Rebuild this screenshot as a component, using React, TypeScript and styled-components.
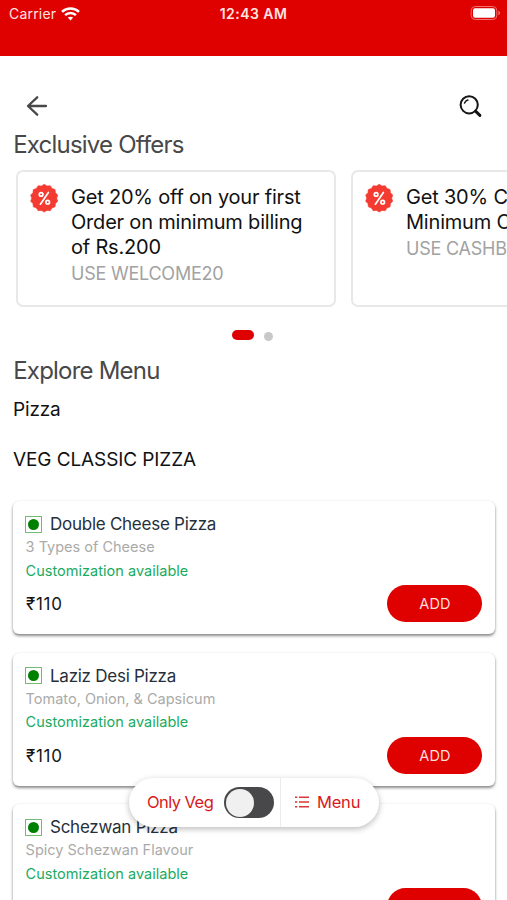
import React from "react";
import styled, { createGlobalStyle } from "styled-components";

const GlobalStyle = createGlobalStyle`
  * { box-sizing: border-box; }
  html, body { margin: 0; padding: 0; background: #fff; }
  body { overflow: hidden; font-family: Inter, "Liberation Sans", sans-serif; }
  button { font-family: inherit; border: 0; padding: 0; background: none; }
  h1, h2, h3, p { margin: 0; font-weight: 400; }
  svg { display: block; }
`;

const Screen = styled.main`
  position: relative;
  width: 507px;
  height: 900px;
  overflow: hidden;
  background: #fff;
`;

const StatusBar = styled.header`
  display: grid;
  grid-template-columns: 1fr auto 1fr;
  height: 56px;
  padding: 4px 6px 0 9px;
  background: #df0000;
  color: #ffe4e2;
  font-size: 14px;
  line-height: 20px;
`;

const Carrier = styled.div`
  display: flex;
  gap: 5px;
  height: 20px;
  align-items: center;
  letter-spacing: 0.2px;
`;

const Clock = styled.div`
  margin-left: -3px;
  font-weight: 600;
  letter-spacing: 0.45px;
`;

const Battery = styled.div`
  display: flex;
  justify-content: flex-end;
  padding-top: 1px;
`;

const Toolbar = styled.nav`
  display: flex;
  justify-content: space-between;
  align-items: center;
  height: 70px;
  padding: 30px 24px 0 25px;
`;

const Heading = styled.h1<{ $gap?: number }>`
  margin-top: ${(p) => p.$gap ?? 0}px;
  padding-left: 13.2px;
  height: 32px;
  line-height: 32px;
  font-size: 24px;
  letter-spacing: -0.79px;
  color: #484848;
`;

const Offers = styled.section`
  display: flex;
  gap: 15px;
  margin-top: 9px;
  padding-left: 16px;
`;

const Offer = styled.article`
  display: flex;
  flex: 0 0 320px;
  gap: 12px;
  height: 137px;
  padding: 12px;
  border: 2px solid #e8e8e8;
  border-radius: 7px;
`;

const OfferTitle = styled.h2`
  width: 250px;
  margin-top: 1px;
  font-size: 20px;
  line-height: 25px;
  letter-spacing: -0.2px;
  color: #111;
  white-space: pre-line;
`;

const OfferCode = styled.p`
  font-size: 18px;
  line-height: 27px;
  letter-spacing: -0.23px;
  color: #a2a2a2;
`;

const Dots = styled.div`
  display: flex;
  justify-content: center;
  align-items: center;
  gap: 10px;
  height: 12px;
  margin-top: 22px;
  padding-right: 3px;
`;

const Dot = styled.i<{ $active?: boolean }>`
  width: ${(p) => (p.$active ? 22 : 9)}px;
  height: ${(p) => (p.$active ? 10 : 9)}px;
  margin-top: ${(p) => (p.$active ? -1 : 2)}px;
  border-radius: 5px;
  background: ${(p) => (p.$active ? "#df0000" : "#c8c8c8")};
`;

const Category = styled.h2<{ $gap: number; $track: number }>`
  margin-top: ${(p) => p.$gap}px;
  padding-left: 13px;
  height: 24px;
  font-size: 19px;
  line-height: 24px;
  letter-spacing: ${(p) => p.$track}px;
  color: #111;
`;

const Dishes = styled.section`
  display: grid;
  gap: 18.6px;
  margin-top: 29.5px;
  padding: 0 12px 0 13px;
`;

const Dish = styled.article`
  height: 133px;
  padding: 12px 13px 0 12px;
  border-radius: 6px;
  background: #fff;
  box-shadow: 0 2px 3px rgba(0, 0, 0, 0.45), 0 0 2px rgba(0, 0, 0, 0.08);
`;

const DishName = styled.h3`
  display: flex;
  align-items: center;
  gap: 8px;
  height: 22px;
  font-size: 17px;
  line-height: 22px;
  letter-spacing: -0.26px;
  color: #25303b;
`;

const VegMark = styled.i`
  display: grid;
  place-items: center;
  width: 17px;
  height: 17px;
  border: 1px solid #74b974;
  &::after {
    content: "";
    width: 11px;
    height: 11px;
    border-radius: 50%;
    background: #008000;
  }
`;

const Detail = styled.p<{ $green?: boolean }>`
  height: 23.5px;
  padding-left: 0.6px;
  font-size: 14.5px;
  line-height: 24px;
  letter-spacing: ${(p) => (p.$green ? 0.02 : 0)}px;
  color: ${(p) => (p.$green ? "#18ab62" : "#aaa")};
`;

const Purchase = styled.div`
  display: flex;
  justify-content: space-between;
  align-items: center;
  height: 37px;
  margin-top: 3px;
`;

const Price = styled.span`
  padding: 1px 0 0 1px;
  font-size: 17px;
  letter-spacing: 0.7px;
  color: #151515;
`;

const AddButton = styled.button`
  width: 95px;
  height: 37px;
  padding-left: 1px;
  border-radius: 19px;
  background: #df0000;
  color: #ffdeda;
  font-size: 14.5px;
  letter-spacing: 0.2px;
`;

const FloatingBar = styled.aside`
  position: absolute;
  left: 129px;
  top: 778px;
  display: flex;
  width: 250px;
  height: 49px;
  border-radius: 25px;
  background: #fff;
  box-shadow: 0 2px 6px rgba(0, 0, 0, 0.27);
  color: #d9181a;
  font-size: 16.5px;
  letter-spacing: -0.55px;
`;

const VegFilter = styled.label`
  display: flex;
  align-items: center;
  justify-content: space-between;
  width: 152px;
  padding: 0 6px 0 18px;
  border-right: 1px solid #ececec;
`;

const BarText = styled.span`
  padding-bottom: 2px;
`;

const Switch = styled.span`
  width: 50px;
  height: 31px;
  padding: 1.5px;
  border-radius: 16px;
  background: #48484a;
  &::after {
    content: "";
    display: block;
    width: 28px;
    height: 28px;
    border-radius: 50%;
    background: #f0f0f0;
  }
`;

const MenuButton = styled.button`
  display: flex;
  align-items: center;
  gap: 8px;
  padding-left: 14px;
  color: inherit;
  font-size: 16.5px;
  letter-spacing: -0.2px;
`;

const MenuIcon = styled.svg`
  margin-bottom: 1px;
`;

const badgePoints = Array.from({ length: 28 }, (_, i) => {
  const r = i % 2 ? 12.5 : 13.9;
  const a = (i * Math.PI) / 14;
  return `${14.2 + r * Math.sin(a)},${14.2 - r * Math.cos(a)}`;
}).join(" ");

const PercentBadge = () => (
  <svg width="29" height="29" viewBox="0 0 29 29">
    <polygon points={badgePoints} fill="#f43b32" stroke="#f43b32" strokeWidth=".6" strokeLinejoin="round" />
    <g fill="none" stroke="#fff" strokeWidth="1.7" strokeLinecap="round">
      <path d="M18.4 8.4 10.4 20.2" />
      <circle cx="11.1" cy="10.4" r="1.8" />
      <circle cx="17.7" cy="18.2" r="1.8" />
    </g>
  </svg>
);

const offers = [
  { title: "Get 20% off on your first\nOrder on minimum billing\nof Rs.200", code: "USE WELCOME20" },
  { title: "Get 30% Cashback on\nMinimum Order of Rs.500", code: "USE CASHBACK30" },
];

const dishes = [
  { name: "Double Cheese Pizza", note: "3 Types of Cheese" },
  { name: "Laziz Desi Pizza", note: "Tomato, Onion, & Capsicum" },
  { name: "Schezwan Pizza", note: "Spicy Schezwan Flavour" },
];

export default function App() {
  return (
    <>
      <GlobalStyle />
      <Screen>
        <StatusBar>
          <Carrier>
            Carrier
            <svg width="19" height="14" viewBox="0 0 19 14" fill="none" stroke="#fff" strokeWidth="2.5">
              <path d="M1 4.8C5.8.3 13.2.3 18 4.8" />
              <path d="M4.1 8.2c3-2.9 7.8-2.9 10.8 0" />
              <path d="m9.5 13.4-2.7-2.8c1.5-1.3 3.9-1.3 5.4 0Z" fill="#fff" stroke="none" />
            </svg>
          </Carrier>
          <Clock>12:43 AM</Clock>
          <Battery>
            <svg width="31" height="16" viewBox="0 0 31 16">
              <rect x="1.2" y="1.5" width="25.6" height="13" rx="4" fill="none" stroke="#f0706e" strokeWidth="1" />
              <rect x="3" y="3.3" width="22" height="9.4" rx="2" fill="#fff" />
              <path d="M28.4 5.8c2.2.7 2.2 3.7 0 4.4Z" fill="#f0706e" />
            </svg>
          </Battery>
        </StatusBar>
        <Toolbar>
          <svg width="24" height="24" viewBox="0 0 24 24" fill="none" stroke="#484848" strokeWidth="2.3" strokeLinecap="round" strokeLinejoin="round">
            <path d="M12.2 3.3 3 12l9.2 8.7M3 12h18" />
          </svg>
          <svg width="26" height="26" viewBox="0 0 26 26" fill="none" stroke="#151515" strokeLinecap="round">
            <circle cx="12.2" cy="11.8" r="8.6" strokeWidth="2" />
            <path d="m18.5 18.2 4.4 4.2" strokeWidth="3" />
            <path d="M7.6 10c.7-1.5 1.8-2.5 3.2-2.9" strokeWidth="1.6" />
          </svg>
        </Toolbar>
        <Heading $gap={3}>Exclusive Offers</Heading>
        <Offers>
          {offers.map((o) => (
            <Offer key={o.code}>
              <PercentBadge />
              <div>
                <OfferTitle>{o.title}</OfferTitle>
                <OfferCode>{o.code}</OfferCode>
              </div>
            </Offer>
          ))}
        </Offers>
        <Dots>
          <Dot $active />
          <Dot />
        </Dots>
        <Heading $gap={14}>Explore Menu</Heading>
        <Category $gap={10.5} $track={-0.15}>Pizza</Category>
        <Category $gap={26} $track={-0.1}>VEG CLASSIC PIZZA</Category>
        <Dishes>
          {dishes.map((d) => (
            <Dish key={d.name}>
              <DishName>
                <VegMark />
                {d.name}
              </DishName>
              <Detail>{d.note}</Detail>
              <Detail $green>Customization available</Detail>
              <Purchase>
                <Price>₹110</Price>
                <AddButton>ADD</AddButton>
              </Purchase>
            </Dish>
          ))}
        </Dishes>
        <FloatingBar>
          <VegFilter>
            <BarText>Only Veg</BarText>
            <Switch />
          </VegFilter>
          <MenuButton>
            <MenuIcon width="14" height="12" viewBox="0 0 14 12" stroke="#d9383a" strokeWidth="1.5">
              <path d="M0 1.2h2.3M4 1.2h10M0 6h2.3M4 6h10M0 10.8h2.3M4 10.8h10" />
            </MenuIcon>
            <BarText>Menu</BarText>
          </MenuButton>
        </FloatingBar>
      </Screen>
    </>
  );
}
